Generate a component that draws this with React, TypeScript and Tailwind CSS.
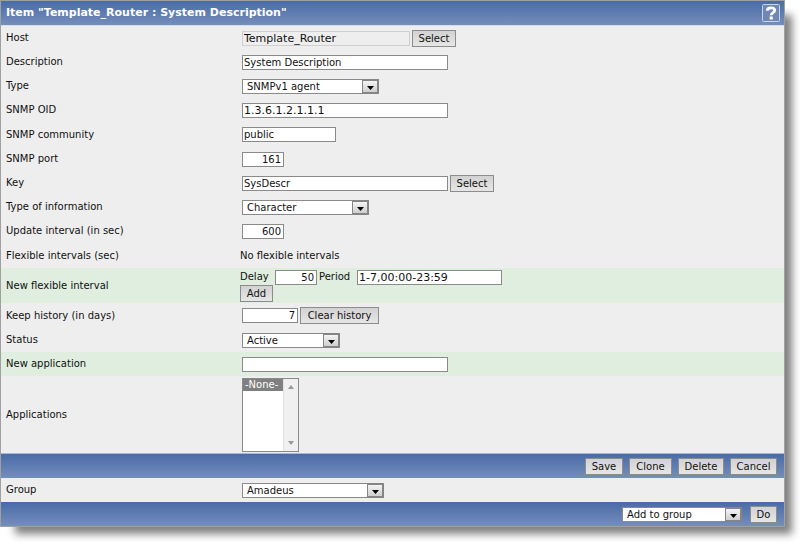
import React from 'react';
import clsx from 'clsx';

interface RowProps {
  label: string;
  htmlFor?: string;
  className?: string;
  children: React.ReactNode;
}

function Row({ label, htmlFor, className = 'h-6', children }: RowProps) {
  return (
    <div className={clsx('grid grid-cols-[239px_1fr] items-center', className)}>
      {htmlFor ? (
        <label htmlFor={htmlFor} className="pl-[5px]">{label}</label>
      ) : (
        <span className="pl-[5px]">{label}</span>
      )}
      <div className="flex items-center">{children}</div>
    </div>
  );
}

function TextInput({ className, ...props }: React.InputHTMLAttributes<HTMLInputElement>) {
  return (
    <input
      type="text"
      className={clsx(
        'mx-0.5 h-[15px] border px-px leading-[13px] outline-none',
        props.readOnly ? 'border-[#cfcfcf] bg-[#eeeeee]' : 'border-[#8a8a8a] bg-white',
        className
      )}
      {...props}
    />
  );
}

function Button({ className, children }: { className?: string; children: React.ReactNode }) {
  return (
    <button
      type="button"
      className={clsx(
        'h-[17px] border border-[#8c8c8c] bg-linear-to-b from-[#d2d2d2] to-[#e6e6e6] text-center leading-[15px]',
        className
      )}
    >
      {children}
    </button>
  );
}

interface SelectProps {
  id?: string;
  value: string;
  label?: string;
  className?: string;
}

function Select({ id, value, label, className }: SelectProps) {
  return (
    <div className={clsx('relative mx-0.5 h-[15px]', className)}>
      <select
        id={id}
        aria-label={label}
        defaultValue={value}
        className="block h-[15px] w-full appearance-none border border-[#8a8a8a] bg-white pl-1 leading-[13px] outline-none"
      >
        <option>{value}</option>
      </select>
      <span className="pointer-events-none absolute inset-y-0 right-0 flex w-[17px] items-center justify-center border-2 border-l border-[#858585] bg-linear-to-b from-[#f4f4f4] to-[#cfcfcf]">
        <svg width="7" height="4" viewBox="0 0 7 4" className="mt-1">
          <path d="M0 0h7L3.5 4z" fill="#000" />
        </svg>
      </span>
    </div>
  );
}

const barClass = 'bg-linear-to-b from-[#4a6ba7] to-[#758eba]';

export default function App() {
  return (
    <div className="pr-[15px] pb-[15px] font-['DejaVu_Sans',sans-serif] text-[10px] leading-[14px] text-[#111111]">
      <form className="border border-[#a0a0a0] bg-[#eeeeee] shadow-[11px_11px_8px_-4px_rgba(0,0,0,0.5)]">
        <header className={clsx('flex h-[25px] items-center justify-between border-b border-[#d5dcea] pr-1 pl-[5px]', barClass)}>
          <h1 className="text-[11px] font-bold text-white">Item "Template_Router : System Description"</h1>
          <button type="button" aria-label="Help" className="h-[18px] w-[18px]">
            <svg width="18" height="18" viewBox="0 0 18 18" fill="none">
              <rect x="0.5" y="0.5" width="17" height="17" rx="1" fill="#6e87b8" stroke="#c9d3e6" />
              <path d="M5.3 6.8C5.3 4.7 6.8 3.9 9 3.9s3.7.9 3.7 2.5c0 2.3-3.5 2.1-3.5 4.8" stroke="#fff" strokeWidth="2.8" />
              <path d="M7.6 12.6h3.2v2.8h-3.2z" fill="#fff" />
            </svg>
          </button>
        </header>

        <Row label="Host" htmlFor="host">
          <TextInput id="host" readOnly defaultValue="Template_Router" className="w-[168px] text-[11px]" />
          <Button className="w-11">Select</Button>
        </Row>
        <Row label="Description" htmlFor="description">
          <TextInput id="description" defaultValue="System Description" className="w-[206px]" />
        </Row>
        <Row label="Type" htmlFor="type">
          <Select id="type" value="SNMPv1 agent" className="w-[137px]" />
        </Row>
        <Row label="SNMP OID" htmlFor="oid">
          <TextInput id="oid" defaultValue="1.3.6.1.2.1.1.1" className="w-[206px] text-[11px]" />
        </Row>
        <Row label="SNMP community" htmlFor="community" className="h-[25px]">
          <TextInput id="community" defaultValue="public" className="w-[94px]" />
        </Row>
        <Row label="SNMP port" htmlFor="port">
          <TextInput id="port" defaultValue="161" className="w-[42px] pr-0.5 text-right" />
        </Row>
        <Row label="Key" htmlFor="key">
          <TextInput id="key" defaultValue="SysDescr" className="w-[206px]" />
          <Button className="w-11">Select</Button>
        </Row>
        <Row label="Type of information" htmlFor="value-type">
          <Select id="value-type" value="Character" className="w-[127px]" />
        </Row>
        <Row label="Update interval (in sec)" htmlFor="delay">
          <TextInput id="delay" defaultValue="600" className="w-[42px] pr-0.5 text-right" />
        </Row>
        <Row label="Flexible intervals (sec)" className="h-[25px]">
          No flexible intervals
        </Row>
        <Row label="New flexible interval" className="h-[35px] bg-[#dfeedf]">
          <div>
            <div className="flex items-center">
              <label htmlFor="flex-delay" className="w-[33px]">Delay</label>
              <TextInput id="flex-delay" defaultValue="50" className="w-[42px] pr-0.5 text-right" />
              <label htmlFor="flex-period" className="w-9">Period</label>
              <TextInput id="flex-period" defaultValue="1-7,00:00-23:59" className="w-[145px] text-[11px]" />
            </div>
            <Button className="block w-[33px]">Add</Button>
          </div>
        </Row>
        <Row label="Keep history (in days)" htmlFor="history" className="h-[25px]">
          <TextInput id="history" defaultValue="7" className="w-14 pr-0.5 text-right" />
          <Button className="w-[79px]">Clear history</Button>
        </Row>
        <Row label="Status" htmlFor="status">
          <Select id="status" value="Active" className="w-[98px]" />
        </Row>
        <Row label="New application" htmlFor="new-app" className="h-6 bg-[#dfeedf]">
          <TextInput id="new-app" className="w-[206px]" />
        </Row>
        <Row label="Applications" htmlFor="applications" className="h-[77px]">
          <div className="mx-0.5 flex h-[74px] w-[57px] border border-[#8a8a8a] bg-white">
            <select
              id="applications"
              size={5}
              className="h-full w-10 overflow-hidden bg-white outline-none"
            >
              <option className="h-3 min-h-0 bg-[#808080] p-0 pl-0.5 leading-3 text-white">-None-</option>
            </select>
            <div className="flex flex-1 flex-col items-center justify-between border-l border-[#e2e2e2] bg-[#f0f0f0] py-1.5">
              <svg width="6" height="4" viewBox="0 0 6 4"><path d="M0 4h6L3 0z" fill="#999" /></svg>
              <svg width="6" height="4" viewBox="0 0 6 4"><path d="M0 0h6L3 4z" fill="#999" /></svg>
            </div>
          </div>
        </Row>

        <div className={clsx('flex h-[25px] items-center justify-end gap-1.5 border-t border-[#a9b8d4] pr-[7px]', barClass)}>
          <Button className="w-[38px]">Save</Button>
          <Button className="w-[43px]">Clone</Button>
          <Button className="w-[46px]">Delete</Button>
          <Button className="w-[47px]">Cancel</Button>
        </div>
        <Row label="Group" htmlFor="group">
          <Select id="group" value="Amadeus" className="w-[142px]" />
        </Row>
        <div className={clsx('flex h-6 items-center justify-end gap-1.5 pr-[7px]', barClass)}>
          <Select value="Add to group" label="Action" className="w-[120px]" />
          <Button className="w-[27px]">Do</Button>
        </div>
      </form>
    </div>
  );
}
